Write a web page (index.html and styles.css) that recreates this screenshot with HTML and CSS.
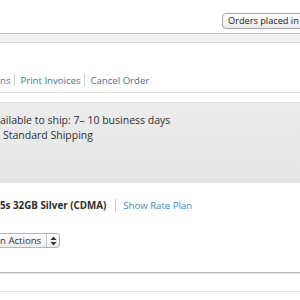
FILE: index.html
```html
<!DOCTYPE html>
<html>
<head>
<meta charset="utf-8">
<link rel="stylesheet" href="styles.css">
</head>
<body>
<div class="page">
  <div class="toolbar">
    <button class="filter-btn">Orders placed in the last 6 months</button>
  </div>
  <div class="band"></div>
  <div class="order-links">
    <a class="link">ns</a>
    <span class="sep"></span>
    <a class="link">Print Invoices</a>
    <span class="sep"></span>
    <a class="link">Cancel Order</a>
  </div>
  <div class="ship-box">
    <div class="ship-line">ailable to ship: 7– 10 business days</div>
    <div class="ship-line indent">Standard Shipping</div>
  </div>
  <div class="item-row">
    <span class="item-name">5s 32GB Silver (CDMA)</span>
    <span class="sep tall"></span>
    <a class="link light">Show Rate Plan</a>
  </div>
  <div class="actions">
    <div class="select"><span class="select-label">n Actions</span><span class="select-arrows">
      <svg width="7" height="10" viewBox="0 0 7 10"><path d="M3.5 0.5 L6.5 4 H0.5 Z M3.5 9.5 L6.5 6 H0.5 Z" fill="#333"/></svg></span></div>
  </div>
  <div class="divider"></div>
  <div class="divider-light"></div>
</div>
</body>
</html>
```
FILE: styles.css
```css
html, body {
  margin: 0;
  padding: 0;
  background: #fff;
  overflow: hidden;
}
.page {
  width: 300px;
  height: 300px;
  overflow: hidden;
  font-family: "Open Sans", sans-serif;
  font-size: 10.5px;
  color: #2e2e2e;
}
.toolbar {
  height: 33px;
  display: flex;
  padding-left: 222px;
  box-sizing: border-box;
  padding-top: 13px;
}
.filter-btn {
  flex: none;
  height: 16px;
  padding: 0 5px;
  font-family: "Open Sans", sans-serif;
  font-size: 9.2px;
  color: #222;
  background: linear-gradient(#fff, #e9e9e9);
  border: 1px solid #a8a8a8;
  border-radius: 4px;
  line-height: 14px;
  white-space: nowrap;
}
.band {
  height: 8px;
  background: #f1f1f1;
  border-top: 1px solid #b8b8b8;
  border-bottom: 1px solid #d9d9d9;
}
.order-links {
  margin-top: 29px;
  height: 16px;
  display: flex;
  align-items: center;
  padding-bottom: 4px;
  border-bottom: 1px solid #e2e2e2;
  font-size: 9.6px;
}
.link {
  color: #3a76a8;
  white-space: nowrap;
}
.link.light {
  color: #3b8cc0;
  font-size: 9.6px;
}
.sep {
  width: 1px;
  height: 12px;
  background: #d0d0d0;
  margin: 0 5px 0 4px;
}
.ship-box {
  margin-top: 9px;
  height: 81px;
  box-sizing: border-box;
  padding-top: 10px;
  background: linear-gradient(#ececec, #e6e6e6);
  border-top: 1px solid #e0e0e0;
}
.ship-line {
  line-height: 15px;
  white-space: nowrap;
}
.ship-line.indent {
  padding-left: 3px;
}
.item-row {
  margin-top: 14px;
  display: flex;
  align-items: center;
  height: 16px;
}
.item-name {
  font-weight: bold;
  font-size: 9.8px;
  white-space: nowrap;
}
.sep.tall {
  height: 13px;
  margin: 0 7px 0 9px;
}
.actions {
  margin-top: 20px;
  height: 15px;
}
.select {
  display: inline-flex;
  align-items: stretch;
  height: 15px;
  box-sizing: border-box;
  border: 1px solid #b5b5b5;
  border-left: none;
  border-radius: 0 4px 4px 0;
  background: linear-gradient(#fff, #ececec);
  font-size: 9.6px;
}
.select-label {
  padding-right: 5px;
  line-height: 13px;
  white-space: nowrap;
}
.select-arrows {
  width: 12px;
  border-left: 1px solid #c8c8c8;
  display: flex;
  align-items: center;
  justify-content: center;
}
.divider {
  margin-top: 24px;
  height: 1px;
  background: #b8b8b8;
  border-bottom: 1px solid #e6e6e6;
}
.divider-light {
  margin-top: 17px;
  height: 1px;
  background: #e4e4e4;
}
```
